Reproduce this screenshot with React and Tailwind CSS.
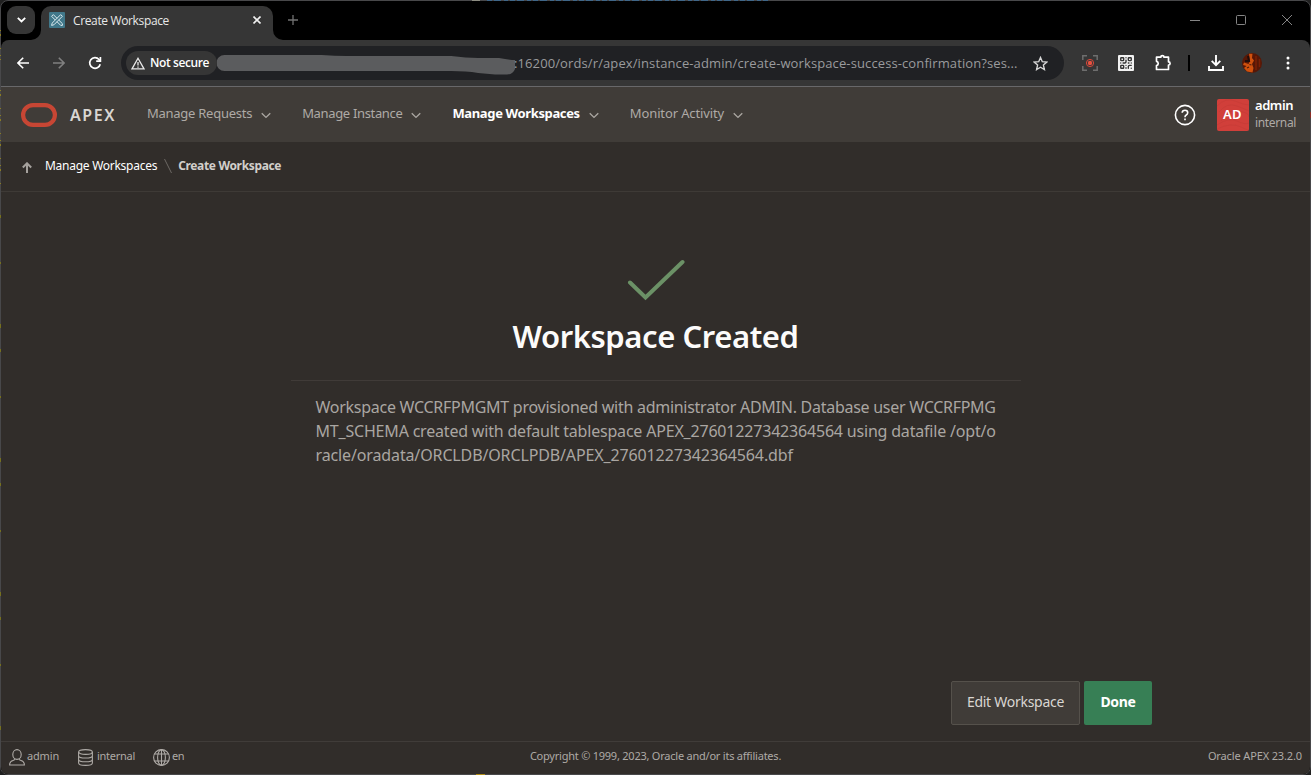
import { QrCode } from "lucide-react";

const Chevron = () => (
  <svg className="ml-[9px] mt-[3px] h-[7px] w-[10px] shrink-0" viewBox="0 0 11 7" fill="none" stroke="#aaa6a1" strokeWidth="1.5">
    <path d="M0.8 1 L5.5 5.6 L10.2 1" />
  </svg>
);

function T({ className, children }) {
  return <span className={"whitespace-nowrap " + className}>{children}</span>;
}

function Tab() {
  return (
    <div className="flex h-10 items-end">
      <div className="flex h-full w-[40px] items-center pl-[6px]">
        <div className="flex h-7 w-7 items-center justify-center rounded-[9px] bg-[#363636]">
          <svg className="h-[6px] w-[9px]" viewBox="0 0 9 6" fill="none" stroke="#fff" strokeWidth="1.8"><path d="M0.8 0.8 L4.5 4.5 L8.2 0.8" /></svg>
        </div>
      </div>
      <div className="relative flex h-[34px] w-[232px] items-center rounded-t-[10px] bg-[#363636] pl-2 pb-[6px]">
        <svg className="absolute -left-[10px] bottom-0 h-[10px] w-[10px]" viewBox="0 0 10 10"><path d="M10 0 A10 10 0 0 1 0 10 H10Z" fill="#363636" /></svg>
        <svg className="absolute -right-[10px] bottom-0 h-[10px] w-[10px]" viewBox="0 0 10 10"><path d="M0 0 A10 10 0 0 0 10 10 H0Z" fill="#363636" /></svg>
        <svg className="h-4 w-4" viewBox="0 0 16 16" fill="none" stroke="#dcebef" strokeWidth="1" strokeLinejoin="round">
          <rect width="16" height="16" rx="1" fill="#41788a" stroke="none" />
          <path d="M4.300 2.600L2.600 4.300L6.300 8M4.300 2.600L8 6.300M9.700 8L13.400 11.700V13.400H11.700L8 9.700M11.700 2.600L13.400 4.300L4.900 12.800L2.600 13.400L3.200 11.100Z" />
        </svg>
        <T className="ml-2 mt-px text-[12px] tracking-[-0.36px] text-[#e8e8e8]">Create Workspace</T>
        <svg className="ml-auto mr-[12px] h-[8px] w-[8px]" viewBox="0 0 8 8" stroke="#f0f0f0" strokeWidth="1.6"><path d="M0.5 0.5 L7.5 7.5 M7.5 0.5 L0.5 7.5" /></svg>
      </div>
      <svg className="mb-[15px] ml-[15px] h-[10px] w-[10px]" viewBox="0 0 10 10" stroke="#727272" strokeWidth="1.3"><path d="M5 0V10M0 5H10" /></svg>
      <div className="ml-auto flex h-full items-center gap-[36px] pr-[18px]">
        <svg className="h-[10px] w-[10px]" viewBox="0 0 10 10" stroke="#858585"><path d="M0 5.5H10" /></svg>
        <svg className="h-[10px] w-[10px]" viewBox="0 0 10 10" stroke="#858585" fill="none"><rect x=".5" y=".5" width="9" height="9" rx="1" /></svg>
        <svg className="h-[10px] w-[10px]" viewBox="0 0 10 10" stroke="#858585"><path d="M0 0L10 10M10 0L0 10" /></svg>
      </div>
    </div>
  );
}

function Toolbar() {
  return (
    <div className="flex h-[46px] items-center rounded-t-[8px] bg-[#363636] pl-[16px]">
      <svg className="h-3 w-3" viewBox="0 0 12 12" fill="none" stroke="#fff" strokeWidth="1.6"><path d="M12 6H1M6.2 0.7L0.9 6L6.2 11.3" /></svg>
      <svg className="ml-[24px] h-3 w-3" viewBox="0 0 12 12" fill="none" stroke="#808080" strokeWidth="1.6"><path d="M0 6H11M5.8 0.7L11.1 6L5.8 11.3" /></svg>
      <svg className="ml-[23px] h-[14px] w-[14px]" viewBox="0 0 14 14" fill="none" stroke="#fff" strokeWidth="1.7"><path d="M12.200 8.200A5.300 5.300 0 1 1 11 3.500L12.200 4.800" /><path d="M12.400 1V5.100H8.200" /></svg>
      <div className="ml-[19px] flex h-[34px] w-[943px] items-center rounded-full bg-[#202124] pl-[5px]">
        <div className="flex h-6 w-[91px] shrink-0 items-center rounded-full bg-[#363636] pl-[5px]">
          <svg className="h-[13px] w-[14px]" viewBox="0 0 14 13" fill="none" stroke="#e8e8e8" strokeWidth="1.3"><path d="M7 1.3L13 11.9H1Z M7 5V8.6M7 9.4V10.8" /></svg>
          <T className="ml-[5px] text-[12px] font-semibold tracking-[-0.4px] text-white">Not secure</T>
        </div>
        <svg className="mt-[3px] h-[22px] w-[299px] shrink-0" viewBox="0 0 300 22"><path d="M7.500 1H105Q118 2 130 2H235Q250 4 262 4H283Q294 6 299 6V15Q297 20.500 291 20.500H279L262 19Q250 17 235 17H7.500A8 8 0 0 1 7.500 1Z" fill="#5b5c5e" /></svg>
        <T className="mt-px -ml-[2px] text-[13px] tracking-[0.11px] text-[#9a9b9d]">:16200/ords/r/apex/instance-admin/create-workspace-success-confirmation?ses...</T>
        <svg className="ml-auto mr-[16px] h-[15px] w-[15px] shrink-0" viewBox="0 0 15 15" fill="none" stroke="#d6d6d6" strokeWidth="1.4"><path d="M7.500 1.500L9.300 5.700L13.800 6.100L10.400 9.100L11.400 13.500L7.500 11.200L3.600 13.500L4.600 9.100L1.200 6.100L5.700 5.700Z" /></svg>
      </div>
      <svg className="ml-[18px] h-4 w-4" viewBox="0 0 16 16" fill="none" stroke="#6e6e6e" strokeWidth="1.5"><path d="M.8 5V.8H5M11 .8H15.200V5M15.200 11V15.200H11M5 15.200H.8V11" /><circle cx="8" cy="8" r="3.600" stroke="#d9483b" strokeWidth="1" /><circle cx="8" cy="8" r="2.200" fill="#e8503f" stroke="none" /></svg>
      <div className="ml-5 flex h-4 w-4 items-center justify-center rounded-[1px] bg-[#f2f2f2]"><QrCode className="h-[14px] w-[14px] text-[#333]" strokeWidth={2.4} /></div>
      <svg className="-mt-[2px] ml-[21px] h-[17px] w-[17px]" viewBox="0 0 17 17" fill="none" stroke="#fff" strokeWidth="1.7" strokeLinejoin="round"><path d="M1.500 3.200H5.800A1.600 1.600 0 0 1 9 3.200H13.500V7.800A1.600 1.600 0 0 1 13.500 11V15.500H1.500V11.600A2.200 2.200 0 0 0 1.500 7.300Z" /></svg>
      <div className="ml-[16px] h-4 w-[2px] bg-black" />
      <svg className="ml-[18px] h-4 w-4" viewBox="0 0 16 16" fill="none" stroke="#fff" strokeWidth="1.9"><path d="M8 0V9.800M3.700 5.800L8 10.100L12.300 5.800M1 11V15H15V11" /></svg>
      <svg className="ml-[18px] h-5 w-5" viewBox="0 0 20 20">
        <circle cx="10" cy="10" r="10" fill="#571706" />
        <path d="M7 .8H10.500L10 5L12 7.500L10 11L11.500 15L10.500 19.500L5 18.500L2 15L4.500 13L1 12L2 9.500L6.500 11L8 8Z" fill="#cf510e" />
        <path d="M6 3L7 8L3 8" stroke="#200d0b" strokeWidth="2" fill="none" /><path d="M7.500 11.500L9.500 12M5 15L7 14" stroke="#4b1b0c" strokeWidth="1.200" />
        <path d="M14 3V17M17.500 6V14" stroke="#7b2005" strokeWidth="1.500" fill="none" />
      </svg>
      <svg className="ml-[24px] h-[14px] w-[4px]" viewBox="0 0 4 14" fill="#fff"><circle cx="2" cy="2" r="1.500" /><circle cx="2" cy="7" r="1.500" /><circle cx="2" cy="12" r="1.500" /></svg>
    </div>
  );
}

export default function App() {
  return (
    <div className="relative h-[775px] w-[1311px] overflow-hidden bg-[#202020]">
      <div className="flex h-full flex-col overflow-hidden rounded-[8px] border border-[#48484a] bg-black font-['Open_Sans',sans-serif]">
        <div className="-mt-px"><Tab /></div>
        <Toolbar />
        <div className="flex min-h-0 flex-1 flex-col border-t border-[#68686a] bg-[#312d2a] font-['Noto_Sans',sans-serif]">
          <header className="flex h-[55px] shrink-0 items-center bg-[#403c38] pl-[20px]">
            <svg className="h-6 w-9" viewBox="0 0 36 24" fill="none" stroke="#c74634" strokeWidth="4.200"><rect x="2.100" y="2.100" width="31.800" height="19.800" rx="9.900" /></svg>
            <div className="ml-[13px] w-[77px] text-[16px] font-semibold tracking-[1.6px] text-[#d9d6d2]">APEX</div>
            <nav className="-mt-[2px] flex items-center text-[13px] text-[#aeaaa6]">
              <T className="tracking-[-0.26px]">Manage Requests</T><Chevron />
              <T className="ml-[31px] tracking-[-0.34px]">Manage Instance</T><Chevron />
              <T className="ml-[31px] font-bold tracking-[-0.36px] text-white">Manage Workspaces</T><Chevron />
              <T className="ml-[31px] tracking-[-0.12px]">Monitor Activity</T><Chevron />
            </nav>
            <svg className="ml-auto h-[22px] w-[22px]" viewBox="0 0 22 22" fill="none" stroke="#fff" strokeWidth="1.600"><circle cx="11" cy="11" r="9.600" /><path d="M8.200 8.800Q8.300 6.300 11 6.300Q13.700 6.300 13.700 8.700Q13.700 10.200 12 11.200Q11 11.800 11 13.200M11 14.500V16.300" /></svg>
            <div className="relative ml-[21px] flex h-8 w-8 items-center justify-center overflow-hidden rounded-[2px] bg-[#d13f3a] pr-px text-[13px] font-semibold tracking-[0.3px] text-white">
              <svg className="absolute inset-0 h-8 w-8" viewBox="0 0 32 32" fill="none" stroke="#c93d38" strokeWidth="1"><path d="M0 7Q9 -2 18 2T32 6M2 13Q10 3 20 7T32 12M4 22Q8 11 20 12T32 18M0 26Q12 18 20 22T32 24M0 30Q14 23 24 28T32 30" /></svg>
              <span className="relative">AD</span>
            </div>
            <div className="-mt-[2px] ml-[6px] mr-[13px] flex w-[42px] flex-col text-[12px] leading-[17px]">
              <T className="self-start text-[13px] font-semibold tracking-[-0.44px] text-white">admin</T>
              <T className="self-start tracking-[-0.35px] text-[#aeaaa6]">internal</T>
            </div>
          </header>
          <div className="flex h-[50px] shrink-0 items-center border-b border-[#3e3a36] pb-px pl-[21px] text-[12px]">
            <svg className="mt-[2px] h-[11px] w-[10px]" viewBox="0 0 10 11" fill="none" stroke="#a5a19d" strokeWidth="2"><path d="M5 11V1.500M0.800 5.500L5 1.300L9.200 5.500" /></svg>
            <T className="ml-[13px] tracking-[-0.27px] text-white">Manage Workspaces</T>
            <svg className="ml-[7px] h-[14px] w-2" viewBox="0 0 8 14" stroke="#6d6965"><path d="M.5 0L7.500 14" /></svg>
            <T className="ml-[6px] font-bold tracking-[-0.34px] text-[#d2cfcb]">Create Workspace</T>
          </div>
          <main className="flex flex-1 flex-col items-center pt-[67px]">
            <svg className="h-[42px] w-[58px]" viewBox="0 0 58 42" fill="none" stroke="#6b9166" strokeWidth="4" strokeLinecap="round"><path d="M3 23.500L18.500 38.500L55.500 3" /></svg>
            <h1 className="mt-[13px] whitespace-nowrap text-[31px] font-semibold leading-[44px] tracking-[-0.43px] text-[#fcfbfa]">Workspace Created</h1>
            <div className="mt-[22px] flex w-[730px] flex-col items-start border-t border-[#403b38] pl-[25px] pt-[14px] text-[16px] leading-6 text-[#aaa6a2]">
              <T className="tracking-[-0.27px]">Workspace WCCRFPMGMT provisioned with administrator ADMIN. Database user WCCRFPMG</T>
              <T className="tracking-[-0.192px]">MT_SCHEMA created with default tablespace APEX_27601227342364564 using datafile /opt/o</T>
              <T className="tracking-[-0.13px]">racle/oradata/ORCLDB/ORCLPDB/APEX_27601227342364564.dbf</T>
            </div>
            <div className="mb-[16px] mr-[158px] mt-auto flex gap-1 self-end text-[14px]">
              <button className="flex h-11 w-[129px] items-center justify-center rounded-[2px] border border-[#55514b] bg-[#403c38] pb-[4px] tracking-[-0.27px] text-[#d9d6d2]">Edit Workspace</button>
              <button className="flex h-11 w-[68px] items-center justify-center rounded-[2px] bg-[#377f55] pb-[4px] font-bold tracking-[-0.36px] text-white">Done</button>
            </div>
          </main>
          <footer className="grid h-[33px] shrink-0 grid-cols-[1fr_auto_1fr] items-center border-t border-[#403c39] pb-[4px] pl-2 pr-2 text-[11px] text-[#aeaaa6]">
            <div className="flex items-center">
              <svg className="mt-[3px] h-[17px] w-4" viewBox="0 0 16 17" fill="none" stroke="#aeaaa6" strokeWidth="1.100"><ellipse cx="8" cy="5.500" rx="4.200" ry="4.900" /><path d="M6 10.200Q5.800 11 4 11.500Q.6 12.500 .6 16H15.400Q15.400 12.500 12 11.500Q10.200 11 10 10.200" /></svg>
              <T className="ml-[2px] w-[32px] tracking-[-0.17px]">admin</T>
              <svg className="ml-[19px] mt-[3px] h-[17px] w-[15px]" viewBox="0 0 15 17" fill="none" stroke="#aeaaa6" strokeWidth="1.100"><ellipse cx="7.500" cy="3" rx="6.900" ry="2.400" /><path d="M.6 3V14C.6 17.200 14.400 17.200 14.400 14V3M.6 6.700C.6 9.800 14.400 9.800 14.400 6.700M.6 10.400C.6 13.500 14.400 13.500 14.400 10.400" /></svg>
              <T className="ml-[4px] w-[38px] tracking-[-0.27px]">internal</T>
              <svg className="ml-[18px] mt-[3px] h-[17px] w-[17px]" viewBox="0 0 17 17" fill="none" stroke="#aeaaa6" strokeWidth="1.100"><circle cx="8.500" cy="8.500" r="7.900" /><ellipse cx="8.500" cy="8.500" rx="3.900" ry="7.900" /><path d="M1.700 5H15.300M1.700 12H15.300M8.500 .6V16.400" /></svg>
              <T className="ml-[2px] tracking-[-0.4px]">en</T>
            </div>
            <T className="tracking-[-0.23px]">Copyright © 1999, 2023, Oracle and/or its affiliates.</T>
            <T className="justify-self-end tracking-[-0.13px]">Oracle APEX 23.2.0</T>
          </footer>
        </div>
      </div>
      <svg className="pointer-events-none absolute inset-0 h-[775px] w-[1311px]" viewBox="0 0 1311 775" fill="none">
        <path d="M487 .5H770" stroke="#3f6688" strokeDasharray="5 2 7 3 4 2" />
        <path d="M472 .5H480" stroke="#8d8d82" />
        <path d="M.5 30V60M.5 90V190" stroke="#8a7c22" strokeDasharray="1 3 2 12 1 6" />
        <path d="M.5 215V730" stroke="#75701f" strokeDasharray="3 44 2 60 4 21" />
        <path d="M476 774.500H485" stroke="#b08c16" />
        <path d="M1310.500 112V118" stroke="#8a2d27" />
      </svg>
    </div>
  );
}
